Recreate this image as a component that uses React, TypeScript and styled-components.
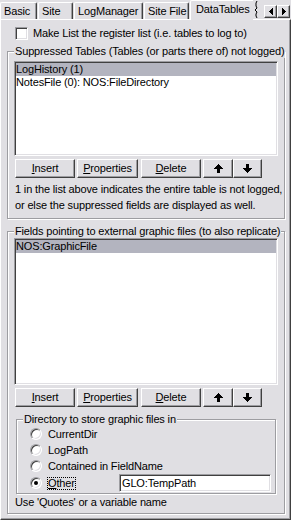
import styled, { createGlobalStyle } from "styled-components";

const FACE = "#e0dfe3";
const SHADOW = "#9d9da1";
const DARK = "#404040";
const SELECTED = "#b3b4bf";

const GlobalStyle = createGlobalStyle`
  body {
    margin: 0;
    background: ${FACE};
    font-family: "Liberation Sans", Arial, sans-serif;
    font-size: 11px;
    letter-spacing: -0.15px;
    color: #000;
  }
`;

const Window = styled.div`
  width: 291px;
  height: 520px;
  display: flex;
  flex-direction: column;
  overflow: hidden;
`;

const TabStrip = styled.div`
  position: relative;
  z-index: 1;
  display: flex;
  align-items: flex-end;
  height: 20px;
  margin-bottom: -1px;
`;

const TabsClip = styled.div`
  display: flex;
  align-items: flex-end;
  flex: 0 0 253px;
  height: 20px;
  overflow: hidden;
`;

const Tab = styled.div<{ $w: number; $active?: boolean }>`
  flex: 0 0 ${(p) => p.$w}px;
  box-sizing: border-box;
  height: ${(p) => (p.$active ? 20 : 17)}px;
  margin: 0 1px ${(p) => (p.$active ? 0 : 1)}px 0;
  padding: 2px 0 0 ${(p) => (p.$active ? 5 : 3)}px;
  border-top: 1px solid #fff;
  border-left: 1px solid #fff;
  border-right: 1px solid ${DARK};
  border-radius: 2px 2px 0 0;
  box-shadow: inset -1px 0 0 ${SHADOW};
  background: ${FACE};
  line-height: 13px;
  white-space: nowrap;
  overflow: hidden;
`;

const Jag = styled.svg`
  flex: 0 0 6px;
  align-self: flex-start;
`;

const ScrollPair = styled.div`
  display: flex;
  margin: 0 0 2px 5px;
`;

const ScrollBtn = styled.div`
  width: 13px;
  height: 13px;
  box-sizing: border-box;
  display: flex;
  align-items: center;
  justify-content: center;
  border: 1px solid;
  border-color: #fff ${DARK} ${DARK} #fff;
  box-shadow: inset -1px -1px 0 ${SHADOW};
  background: ${FACE};
`;

const Page = styled.div`
  flex: 1;
  box-sizing: border-box;
  border: 1px solid;
  border-color: #fff ${DARK} ${DARK} #fff;
  box-shadow: inset -1px -1px 0 ${SHADOW};
  padding: 0 0 0 6px;
`;

const CheckRow = styled.label`
  display: flex;
  align-items: center;
  gap: 5px;
  height: 13px;
  margin: 7px 0 0 8px;
  line-height: 13px;
  white-space: nowrap;
`;

const CheckBox = styled.span`
  width: 13px;
  height: 13px;
  box-sizing: border-box;
  border: 1px solid;
  border-color: ${SHADOW} #fff #fff ${SHADOW};
  box-shadow: inset 1px 1px 0 ${DARK}, inset -1px -1px 0 ${FACE};
  background: #fff;
`;

const Group = styled.fieldset<{ $w: number; $mt: number; $ml?: number; $pad: string }>`
  width: ${(p) => p.$w}px;
  box-sizing: border-box;
  margin: ${(p) => p.$mt}px 0 0 ${(p) => p.$ml ?? 0}px;
  padding: ${(p) => p.$pad};
  border: 1px solid ${SHADOW};
  box-shadow: inset 1px 1px 0 #fff, 1px 1px 0 #fff;
  min-width: 0;
`;

const Legend = styled.legend`
  padding: 0 1px;
  line-height: 14px;
  background: ${FACE};
  white-space: nowrap;
`;

const ListBox = styled.div<{ $h: number; $mt?: number }>`
  width: 264px;
  height: ${(p) => p.$h}px;
  margin-top: ${(p) => p.$mt ?? 0}px;
  box-sizing: border-box;
  padding: 1px;
  border: 1px solid;
  border-color: ${SHADOW} #fff #fff ${SHADOW};
  box-shadow: inset 1px 1px 0 ${DARK}, inset -1px -1px 0 ${FACE};
  background: #fff;
`;

const ListItem = styled.div<{ $selected?: boolean }>`
  height: 13px;
  line-height: 13px;
  white-space: nowrap;
  background: ${(p) => (p.$selected ? SELECTED : "transparent")};
`;

const ButtonRow = styled.div`
  display: flex;
  margin-top: 3px;
`;

const Button = styled.button<{ $w: number; $ml: number }>`
  width: ${(p) => p.$w}px;
  height: 19px;
  margin-left: ${(p) => p.$ml}px;
  box-sizing: border-box;
  padding: 0;
  display: flex;
  align-items: center;
  justify-content: center;
  border: 1px solid;
  border-color: #fff ${DARK} ${DARK} #fff;
  border-radius: 0;
  box-shadow: inset -1px -1px 0 ${SHADOW};
  background: ${FACE};
  font: inherit;
  letter-spacing: inherit;
  line-height: 13px;
  color: #000;
`;

const Note = styled.div`
  margin: 3px 0 0 1px;
  line-height: 16px;
  white-space: nowrap;
`;

const RadioRow = styled.div<{ $h?: number }>`
  display: flex;
  align-items: center;
  height: ${(p) => p.$h ?? 16}px;
  margin-left: 7px;
`;

const Radio = styled.span<{ $checked?: boolean }>`
  position: relative;
  flex: 0 0 12px;
  height: 12px;
  box-sizing: border-box;
  border-radius: 50%;
  border: 1px solid;
  border-color: ${SHADOW} #fff #fff ${SHADOW};
  box-shadow: inset 1px 1px 0 ${DARK}, inset -1px -1px 0 ${FACE};
  background: #fff;

  &::after {
    content: "";
    display: ${(p) => (p.$checked ? "block" : "none")};
    position: absolute;
    left: 3px;
    top: 3px;
    width: 4px;
    height: 4px;
    border-radius: 50%;
    background: #000;
  }
`;

const RadioLabel = styled.span<{ $focus?: boolean }>`
  margin-left: 5px;
  line-height: 11px;
  border: 1px dotted ${(p) => (p.$focus ? "#000" : "transparent")};
  white-space: nowrap;
`;

const TextBox = styled.div`
  width: 152px;
  height: 18px;
  margin-left: auto;
  box-sizing: border-box;
  padding: 0 2px;
  border: 1px solid;
  border-color: ${SHADOW} #fff #fff ${SHADOW};
  box-shadow: inset 1px 1px 0 ${DARK}, inset -1px -1px 0 ${FACE};
  background: #fff;
  line-height: 16px;
`;

const Hint = styled.div`
  margin: 1px 0 0 1px;
  line-height: 14px;
`;

function PixelRows({ rows, w, h }: { rows: [number, number][]; w: number; h: number }) {
  return (
    <svg width={w} height={h} shapeRendering="crispEdges">
      {rows.map(([x, len], i) => (
        <rect key={i} x={x} y={i} width={len} height={1} fill="#000" />
      ))}
    </svg>
  );
}

const upRows: [number, number][] = [
  [4, 1], [3, 3], [2, 5], [1, 7], [0, 9], [3, 3], [3, 3], [3, 3], [3, 3],
];
const downRows = [...upRows].reverse();

function SideArrow({ left }: { left?: boolean }) {
  const cols = [[3, 1], [2, 3], [1, 5], [0, 7]];
  return (
    <svg width="4" height="7" shapeRendering="crispEdges">
      {cols.map(([y, len], i) => (
        <rect key={i} x={left ? i : 3 - i} y={y} width={1} height={len} fill="#000" />
      ))}
    </svg>
  );
}

function Buttons() {
  return (
    <ButtonRow>
      <Button $w={60} $ml={1}>
        <span><u>I</u>nsert</span>
      </Button>
      <Button $w={61} $ml={2}>
        <span><u>P</u>roperties</span>
      </Button>
      <Button $w={60} $ml={3}>
        <span><u>D</u>elete</span>
      </Button>
      <Button $w={30} $ml={2}>
        <PixelRows rows={upRows} w={9} h={9} />
      </Button>
      <Button $w={29} $ml={0}>
        <PixelRows rows={downRows} w={9} h={9} />
      </Button>
    </ButtonRow>
  );
}

const tabs = [
  { label: "Basic", w: 37 },
  { label: "Site", w: 35 },
  { label: "LogManager", w: 69 },
  { label: "Site File", w: 45 },
  { label: "DataTables", w: 70, active: true },
];

export default function App() {
  return (
    <>
      <GlobalStyle />
      <Window>
        <TabStrip>
          <TabsClip>
            {tabs.map((t) => (
              <Tab key={t.label} $w={t.w} $active={t.active}>
                {t.label}
              </Tab>
            ))}
          </TabsClip>
          <Jag width="6" height="19" viewBox="0 0 6 19">
            <polyline
              points="4,1 3,3 3,6 4,8 2,10 4,12 3,14 3,16 4,18"
              fill="none"
              stroke="#000"
              strokeWidth="1"
            />
          </Jag>
          <ScrollPair>
            <ScrollBtn>
              <SideArrow left />
            </ScrollBtn>
            <ScrollBtn>
              <SideArrow />
            </ScrollBtn>
          </ScrollPair>
        </TabStrip>
        <Page>
          <CheckRow>
            <CheckBox />
            Make List the register list (i.e. tables to log to)
          </CheckRow>

          <Group $w={278} $mt={4} $pad="0 2px 5px 6px">
            <Legend>Suppressed Tables (Tables (or parts there of) not logged)</Legend>
            <ListBox $h={95} $mt={3}>
              <ListItem $selected>LogHistory (1)</ListItem>
              <ListItem>NotesFile (0): NOS:FileDirectory</ListItem>
            </ListBox>
            <Buttons />
            <Note>
              1 in the list above indicates the entire table is not logged,
              <br />
              or else the suppressed fields are displayed as well.
            </Note>
          </Group>

          <Group $w={278} $mt={5} $pad="0 2px 4px 6px">
            <Legend>Fields pointing to external graphic files (to also replicate)</Legend>
            <ListBox $h={147}>
              <ListItem $selected>NOS:GraphicFile</ListItem>
            </ListBox>
            <Buttons />

            <Group $w={260} $mt={5} $ml={2} $pad="0 4px 1px 6px">
              <Legend>Directory to store graphic files in</Legend>
              <RadioRow>
                <Radio />
                <RadioLabel>CurrentDir</RadioLabel>
              </RadioRow>
              <RadioRow>
                <Radio />
                <RadioLabel>LogPath</RadioLabel>
              </RadioRow>
              <RadioRow>
                <Radio />
                <RadioLabel>Contained in FieldName</RadioLabel>
              </RadioRow>
              <RadioRow $h={18}>
                <Radio $checked />
                <RadioLabel $focus>
                  <u>O</u>ther
                </RadioLabel>
                <TextBox>GLO:TempPath</TextBox>
              </RadioRow>
            </Group>
            <Hint>Use 'Quotes' or a variable name</Hint>
          </Group>
        </Page>
      </Window>
    </>
  );
}
